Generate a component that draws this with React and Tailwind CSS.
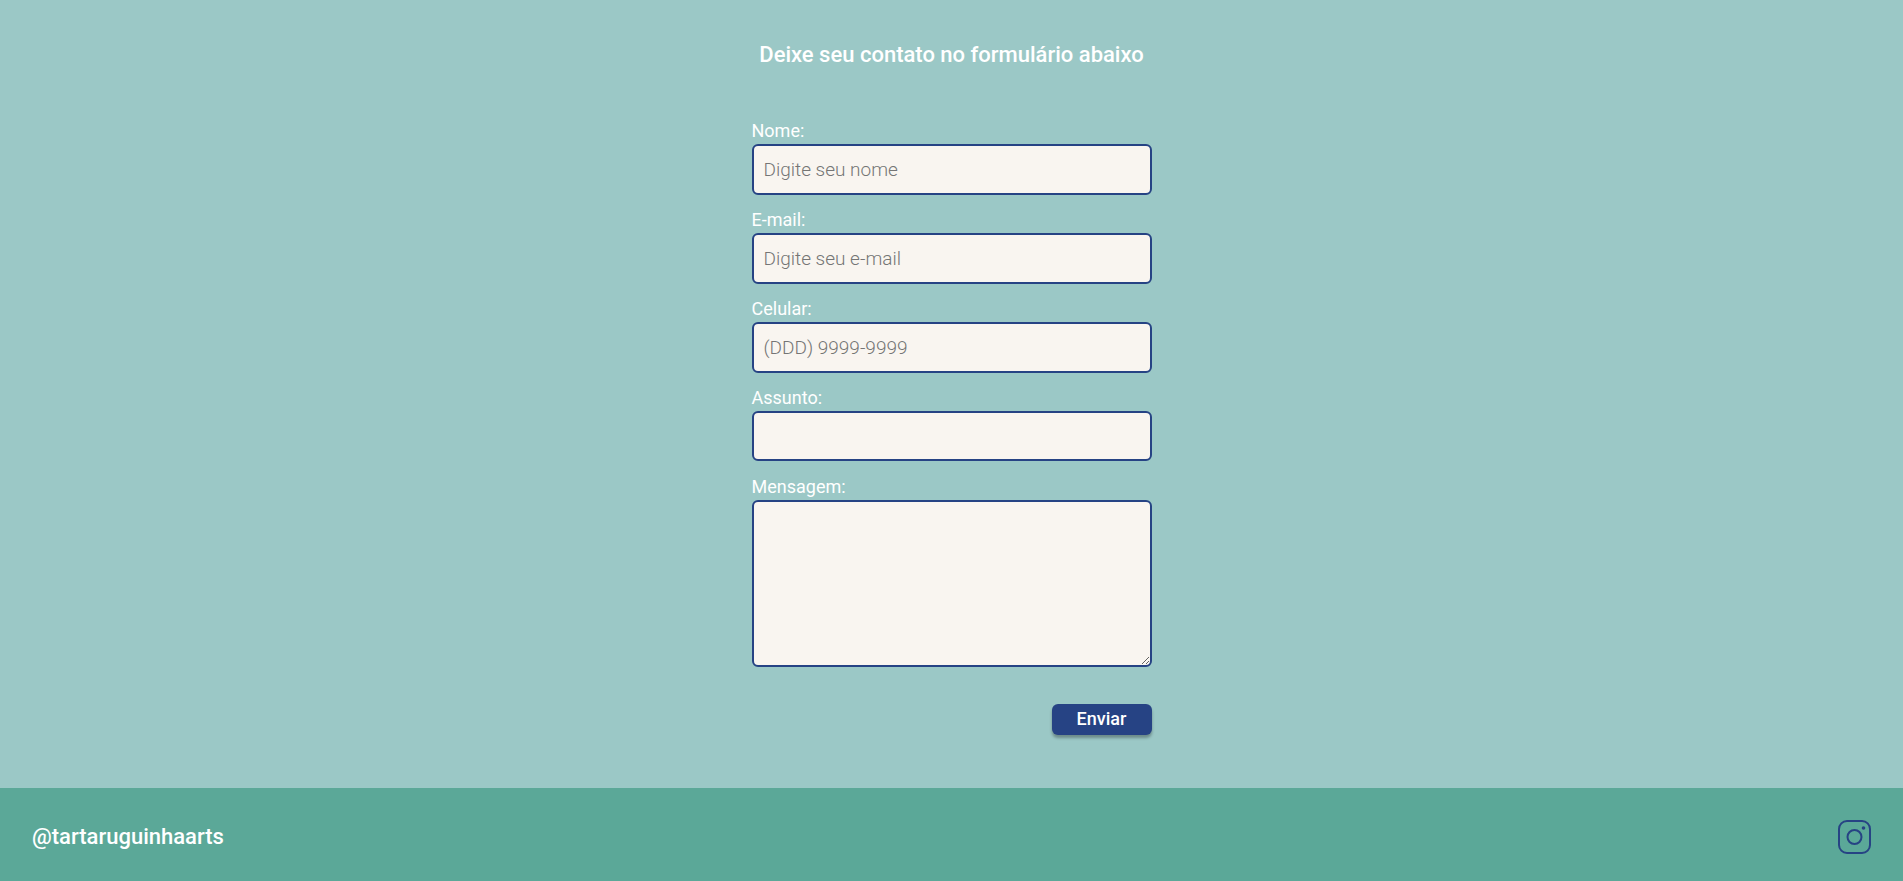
const fields = [
  { id: "nome", label: "Nome:", type: "text", placeholder: "Digite seu nome", size: "h-[51px]" },
  { id: "email", label: "E-mail:", type: "email", placeholder: "Digite seu e-mail", size: "h-[51px]" },
  { id: "celular", label: "Celular:", type: "tel", placeholder: "(DDD) 9999-9999", size: "h-[51px]" },
  { id: "assunto", label: "Assunto:", type: "text", placeholder: "", size: "h-[50px]" },
];

const labelClass = "mb-0.5 text-lg leading-[22px] text-white";
const controlClass =
  "w-full rounded-md border-2 border-[#264384] bg-[#f9f5f0] px-[10px] text-[19px] font-light text-[#333333] placeholder:text-[#757575]";

function InstagramIcon() {
  return (
    <svg viewBox="0 0 33 34" className="h-[34px] w-[33px]" fill="none" stroke="#264384" strokeWidth="2" aria-hidden="true">
      <rect x="1" y="1" width="31" height="32" rx="8" />
      <circle cx="16.5" cy="17" r="7" />
      <circle cx="25.5" cy="8" r="1.8" fill="#264384" stroke="none" />
    </svg>
  );
}

export default function App() {
  return (
    <div className="flex min-h-screen flex-col bg-[#9bc8c6] font-['Roboto',sans-serif]">
      <main className="flex flex-1 flex-col items-center px-4 pt-10 pb-[53px]">
        <h1 className="text-center text-[22px] leading-[30px] font-medium text-white">
          Deixe seu contato no formulário abaixo
        </h1>
        <form className="mt-[50px] flex w-full max-w-[400px] flex-col" onSubmit={(e) => e.preventDefault()}>
          {fields.map((f) => (
            <div key={f.id} className="flex min-h-[89px] flex-col">
              <label htmlFor={f.id} className={labelClass}>{f.label}</label>
              <input id={f.id} name={f.id} type={f.type} placeholder={f.placeholder} className={`${controlClass} ${f.size}`} />
            </div>
          ))}
          <label htmlFor="mensagem" className={labelClass}>Mensagem:</label>
          <textarea id="mensagem" name="mensagem" className={`${controlClass} h-[167px] resize py-2`} />
          <button
            type="submit"
            className="mt-[37px] h-[31px] w-[100px] self-end rounded-md bg-[#264384] pb-0.5 text-lg leading-6 font-medium text-white shadow-[0_3px_3px_rgba(0,0,0,0.3)]"
          >
            Enviar
          </button>
        </form>
      </main>
      <footer className="flex h-[93px] items-center justify-between bg-[#5ba898] px-8 pt-1">
        <p className="text-[22px] leading-7 font-medium text-white">@tartaruguinhaarts</p>
        <a href="#instagram" aria-label="Instagram">
          <InstagramIcon />
        </a>
      </footer>
    </div>
  );
}
